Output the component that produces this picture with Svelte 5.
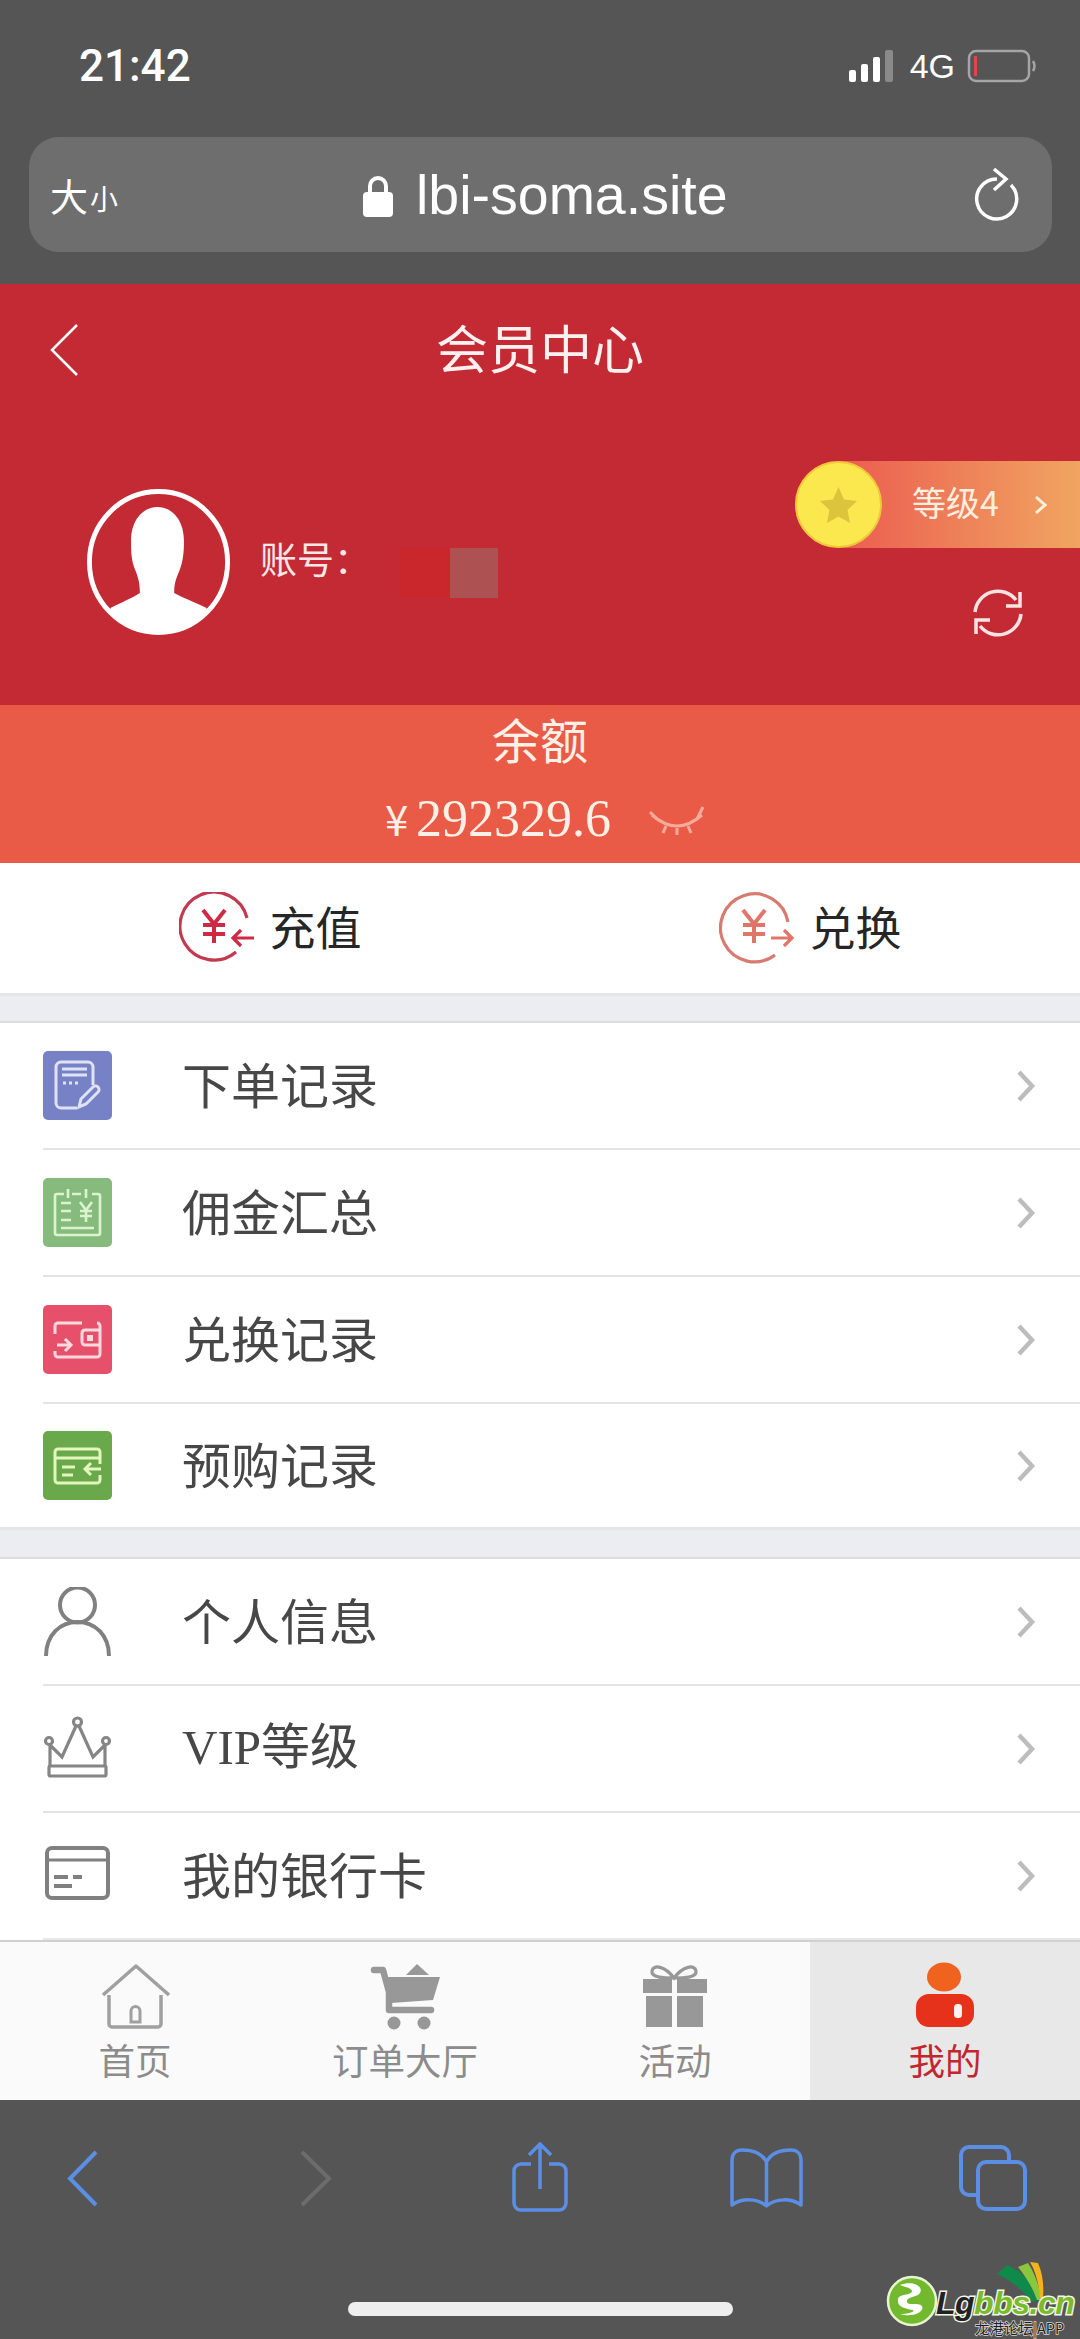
<div class="page">
  <header class="chrome">
    <div class="status">
      <span class="time">21:42</span>
      <div class="status-right">
        <svg width="50" height="34" viewBox="0 0 50 34">
          <rect x="1" y="21" width="7" height="12" rx="2" fill="#fff" />
          <rect x="13" y="15" width="7" height="18" rx="2" fill="#fff" />
          <rect x="25" y="8" width="7" height="25" rx="2" fill="#fff" />
          <rect x="37" y="1" width="8" height="32" rx="2" fill="#8a8a8a" />
        </svg>
        <span class="net">4G</span>
        <svg width="70" height="34" viewBox="0 0 70 34">
          <rect x="2" y="2" width="60" height="30" rx="7" fill="none" stroke="#a5a5a5" stroke-width="2.5" />
          <rect x="7" y="7" width="3" height="20" fill="#e2454a" />
          <path d="M66 12 Q69 17 66 22" fill="none" stroke="#a5a5a5" stroke-width="2.5" />
        </svg>
      </div>
    </div>
    <div class="address">
      <span class="size"><span class="big">大</span><span class="small">小</span></span>
      <div class="url">
        <svg width="30" height="42" viewBox="0 0 30 42">
          <path d="M7 18V11a8 8 0 0 1 16 0v7" fill="none" stroke="#fff" stroke-width="4" />
          <rect x="0" y="17" width="30" height="25" rx="4" fill="#fff" />
        </svg>
        <span>lbi-soma.site</span>
      </div>
      <svg class="reload" width="46" height="54" viewBox="0 0 46 54">
        <path d="M37 18 A20 20 0 1 1 23 12" fill="none" stroke="#fff" stroke-width="3.5" />
        <path d="M20 2 L32 12 L20 23" fill="none" stroke="#fff" stroke-width="3.5" />
      </svg>
    </div>
  </header>

  <section class="hero">
    <div class="nav">
      <svg width="30" height="54" viewBox="0 0 30 54">
        <path d="M28 2 L3 27 L28 52" fill="none" stroke="#fff" stroke-width="2.5" />
      </svg>
      <h1>会员中心</h1>
      <span></span>
    </div>
    <div class="profile">
      <div class="account">
        <svg class="avatar" width="143" height="146" viewBox="0 0 146 146" preserveAspectRatio="none">
          <defs><clipPath id="avatar-clip"><circle cx="73" cy="73" r="71" /></clipPath></defs>
          <circle cx="73" cy="73" r="70.5" fill="none" stroke="#fff" stroke-width="5" />
          <path clip-path="url(#avatar-clip)" d="M72 18 C86 18 99 30 99 52 C99 64 98 72 95 80 C92 88 89 92 89 104 C96 108 110 113 122 119 L122 150 L24 150 L24 119 C36 113 48 108 54 104 C54 92 51 85 48 78 C45 68 45 62 45 52 C45 30 58 18 72 18Z" fill="#fff" />
        </svg>
        <span class="label">账号：</span>
        <div class="redacted"><i></i><b></b></div>
      </div>
      <div class="side">
        <div class="level">
          <svg width="87" height="87" viewBox="0 0 87 87">
            <circle cx="43.5" cy="43.5" r="42.5" fill="#fbe74e" stroke="#efc83a" stroke-width="2" />
            <path d="M43.5 26 L49 38.5 L62 40 L52.5 49 L55 62 L43.5 55.5 L32 62 L34.5 49 L25 40 L38 38.5Z" fill="#dcc43c" />
          </svg>
          <span class="level-text">等级4</span>
          <svg width="14" height="20" viewBox="0 0 14 20">
            <path d="M2 2 L11 10 L2 18" fill="none" stroke="#fdf0dc" stroke-width="3" />
          </svg>
        </div>
        <svg class="sync" width="52" height="52" viewBox="0 0 52 52">
          <path d="M3 25 A23 23 0 0 1 44 13" fill="none" stroke="#fbe3e3" stroke-width="3.5" />
          <path d="M49 27 A23 23 0 0 1 8 39" fill="none" stroke="#fbe3e3" stroke-width="3.5" />
          <path d="M48 5 V19 H34" fill="none" stroke="#fbe3e3" stroke-width="3.5" />
          <path d="M4 47 V33 H18" fill="none" stroke="#fbe3e3" stroke-width="3.5" />
        </svg>
      </div>
    </div>
  </section>

  <section class="balance">
    <div class="balance-title">余额</div>
    <div class="amount">
      <span class="yen">¥</span><span class="digits">292329.6</span>
      <svg width="56" height="30" viewBox="0 0 56 30">
        <path d="M3 9 Q28 31 53 9" fill="none" stroke="#f4ab9a" stroke-width="3" />
        <path d="M8 13 L1 6 M48 13 L54 1 M17 20 L14 27 M28 22 L28 29 M39 20 L42 27" fill="none" stroke="#f4ab9a" stroke-width="3" />
      </svg>
    </div>
  </section>

  <section class="actions">
    <div class="action">
      <svg width="76" height="72" viewBox="0 0 76 72">
        <path d="M68 26 A34 34 0 1 0 57 60" fill="none" stroke="#c23a50" stroke-width="3.2" />
        <path d="M24 18 L35 32 L46 18 M24 33 H46 M24 42 H46 M35 32 V51" fill="none" stroke="#cf2a44" stroke-width="4" />
        <path d="M75 46 H54 M62 38 L54 46 L62 54" fill="none" stroke="#cf2a44" stroke-width="3.2" />
      </svg>
      <span>充值</span>
    </div>
    <div class="action">
      <svg width="76" height="72" viewBox="0 0 76 72">
        <path d="M69 30 A34 34 0 1 0 56 63" fill="none" stroke="#d77a70" stroke-width="3.2" />
        <path d="M24 18 L35 32 L46 18 M24 33 H46 M24 42 H46 M35 32 V51" fill="none" stroke="#e0756a" stroke-width="4" />
        <path d="M52 46 H73 M65 38 L73 46 L65 54" fill="none" stroke="#e0756a" stroke-width="3.2" />
      </svg>
      <span>兑换</span>
    </div>
  </section>

  <div class="gap first"></div>

  {#snippet chevron()}
    <svg width="20" height="34" viewBox="0 0 20 34">
      <path d="M3 3 L16 17 L3 31" fill="none" stroke="#bdbdbd" stroke-width="4.5" />
    </svg>
  {/snippet}

  {#snippet row(label, icon)}
    <div class="row">
      {@render icon()}
      <span class="row-label">{@html label}</span>
      {@render chevron()}
    </div>
  {/snippet}

  {#snippet doc()}
    <svg class="tile" width="69" height="69" viewBox="0 0 69 69">
      <rect width="69" height="69" rx="5" fill="#7782c6" />
      <path d="M34 57 H18 a5 5 0 0 1-5-5 V16 a5 5 0 0 1 5-5 H45 a5 5 0 0 1 5 5 V34" fill="none" stroke="#dfe2f6" stroke-width="3" />
      <path d="M19 18 H44 M19 24 H44" stroke="#dfe2f6" stroke-width="3" />
      <path d="M20 32 H23 M26 32 H29 M32 32 H35" stroke="#dfe2f6" stroke-width="3" />
      <path d="M36 56 L38 48 L50 36 a3.5 3.5 0 0 1 5 5 L43 53Z" fill="none" stroke="#dfe2f6" stroke-width="3" />
    </svg>
  {/snippet}
  {#snippet calendar()}
    <svg class="tile" width="69" height="69" viewBox="0 0 69 69">
      <rect width="69" height="69" rx="5" fill="#86bb7d" />
      <path d="M21 16 H14 a2 2 0 0 0-2 2 V55 a2 2 0 0 0 2 2 H55 a2 2 0 0 0 2-2 V18 a2 2 0 0 0-2-2 H49 M29 16 H38" fill="none" stroke="#dcf3cf" stroke-width="2.6" />
      <path d="M25 11 V20 M43 11 V20" stroke="#dcf3cf" stroke-width="2.6" />
      <path d="M18 25 H28 M18 33 H28 M18 42 H28 M18 50 H51" stroke="#dcf3cf" stroke-width="2.6" />
      <path d="M37 24 L43 32 L49 24 M37 33 H49 M37 38 H49 M43 32 V44" fill="none" stroke="#dcf3cf" stroke-width="2.6" />
    </svg>
  {/snippet}
  {#snippet wallet()}
    <svg class="tile" width="69" height="69" viewBox="0 0 69 69">
      <rect width="69" height="69" rx="5" fill="#e6506a" />
      <path d="M12 29 V21 a3 3 0 0 1 3-3 H39 M54 18 a3 3 0 0 1 3 3 V49 a3 3 0 0 1-3 3 H15 a3 3 0 0 1-3-3 V46" fill="none" stroke="#fbdadf" stroke-width="3" />
      <path d="M57 25 H42 a3 3 0 0 0-3 3 V37 a3 3 0 0 0 3 3 H57" fill="none" stroke="#fbdadf" stroke-width="3" />
      <rect x="44" y="30" width="6" height="6" fill="#fbdadf" />
      <path d="M14 40 H28 M22 34 L28 40 L22 46" fill="none" stroke="#fbdadf" stroke-width="3" />
    </svg>
  {/snippet}
  {#snippet cardIn()}
    <svg class="tile" width="69" height="69" viewBox="0 0 69 69">
      <rect width="69" height="69" rx="5" fill="#69a84b" />
      <path d="M57 33 V21 a3 3 0 0 0-3-3 H15 a3 3 0 0 0-3 3 V49 a3 3 0 0 0 3 3 H54 a3 3 0 0 0 3-3 V44" fill="none" stroke="#e3f6bd" stroke-width="3" />
      <path d="M12 27 H57 M19 36 H32 M19 44 H30" stroke="#e3f6bd" stroke-width="3" />
      <path d="M58 38 H42 M48 32 L42 38 L48 44" fill="none" stroke="#e3f6bd" stroke-width="3" />
    </svg>
  {/snippet}
  {#snippet person()}
    <svg class="tile" width="69" height="69" viewBox="0 0 69 69">
      <circle cx="34.5" cy="18" r="17.5" fill="none" stroke="#808080" stroke-width="4" />
      <path d="M3 69 C3 48 17 35 34.5 35 C52 35 66 48 66 69" fill="none" stroke="#808080" stroke-width="4" />
    </svg>
  {/snippet}
  {#snippet crown()}
    <svg class="tile" width="69" height="69" viewBox="0 0 69 69">
      <circle cx="34.5" cy="8" r="4" fill="none" stroke="#858585" stroke-width="3.2" />
      <circle cx="6" cy="27" r="3.5" fill="none" stroke="#858585" stroke-width="3.2" />
      <circle cx="63" cy="27" r="3.5" fill="none" stroke="#858585" stroke-width="3.2" />
      <path d="M7 31 V52 M62 31 V52 M8 32 L19 43 L33 12 M61 32 L50 43 L36 12" fill="none" stroke="#858585" stroke-width="3.2" />
      <rect x="6" y="52" width="57" height="10" rx="1.5" fill="none" stroke="#858585" stroke-width="3.2" />
    </svg>
  {/snippet}
  {#snippet bankcard()}
    <svg class="tile" width="69" height="69" viewBox="0 0 69 69">
      <rect x="4" y="7" width="61" height="50" rx="5" fill="none" stroke="#808080" stroke-width="4" />
      <path d="M4 19 H65" stroke="#808080" stroke-width="3" />
      <path d="M11 36 H25 M30 36 H39 M11 45 H29" stroke="#808080" stroke-width="4" />
    </svg>
  {/snippet}

  <section class="list">
    {@render row('下单记录', doc)}
    {@render row('佣金汇总', calendar)}
    {@render row('兑换记录', wallet)}
    {@render row('预购记录', cardIn)}
  </section>

  <div class="gap"></div>

  <section class="list second">
    {@render row('个人信息', person)}
    {@render row('<span class="latin">VIP</span>等级', crown)}
    {@render row('我的银行卡', bankcard)}
  </section>

  <nav class="tabs">
    <div class="tab">
      <svg width="80" height="70" viewBox="0 0 80 70">
        <path d="M8 33 L41 4 L74 33 M14 33 V62 a3 3 0 0 0 3 3 H63 a3 3 0 0 0 3-3 V33" fill="none" stroke="#a0a0a0" stroke-width="3.5" stroke-linejoin="round" />
        <path d="M36 60 V49 a4.5 4.5 0 0 1 9 0 V60Z" fill="none" stroke="#a0a0a0" stroke-width="3" />
      </svg>
      <span>首页</span>
    </div>
    <div class="tab">
      <svg width="80" height="70" viewBox="0 0 80 70">
        <path d="M9 8 H18 L24 30 V48 H66" fill="none" stroke="#989898" stroke-width="6.5" stroke-linecap="round" stroke-linejoin="round" />
        <path d="M21 15 H75 L68 38 L26 41Z" fill="#989898" />
        <path d="M41 13 L52 2 L64 13Z" fill="#989898" />
        <circle cx="29" cy="61" r="6.5" fill="#989898" />
        <circle cx="59" cy="61" r="6.5" fill="#989898" />
      </svg>
      <span>订单大厅</span>
    </div>
    <div class="tab">
      <svg width="80" height="70" viewBox="0 0 80 70">
        <path d="M8 17 H37 V31 H8Z M42 17 H72 V31 H42Z M11 34 H37 V65 H11Z M42 34 H68 V65 H42Z" fill="#989898" />
        <path d="M39 16 C30 4 18 2 17 9 C16 16 30 16 39 16 C48 16 62 16 61 9 C60 2 48 4 39 16Z" fill="none" stroke="#989898" stroke-width="3.2" />
      </svg>
      <span>活动</span>
    </div>
    <div class="tab active">
      <svg width="80" height="70" viewBox="0 0 80 70">
        <ellipse cx="39" cy="15" rx="17" ry="14.5" fill="#f0631f" />
        <rect x="11" y="32" width="58" height="33" rx="13" fill="#e6311b" />
        <rect x="49" y="42" width="8" height="14" rx="3.5" fill="#fdf3ee" />
      </svg>
      <span>我的</span>
    </div>
  </nav>

  <footer class="toolbar">
    <svg width="60" height="72" viewBox="0 0 60 72">
      <path d="M43 10 L17 36.5 L43 63" fill="none" stroke="#5b8fe6" stroke-width="4" />
    </svg>
    <svg width="60" height="72" viewBox="0 0 60 72">
      <path d="M20 10 L47 36.5 L20 63" fill="none" stroke="#6c6c6c" stroke-width="4" />
    </svg>
    <svg width="60" height="72" viewBox="0 0 60 72">
      <path d="M21 22 H11 a7 7 0 0 0-7 7 V61 a7 7 0 0 0 7 7 H49 a7 7 0 0 0 7-7 V29 a7 7 0 0 0-7-7 H39" fill="none" stroke="#5b8fe6" stroke-width="3.5" />
      <path d="M30 3 V47 M19 13 L30 2 L41 13" fill="none" stroke="#5b8fe6" stroke-width="3.5" />
    </svg>
    <svg class="over" width="60" height="72" viewBox="0 0 60 72">
      <path d="M27.5 20 C23 11 13 8 3 8 C-3 8 -7 12 -7 18 V63 C3 56 18 56 27.5 64 C37 56 52 56 62 63 V18 C62 12 58 8 52 8 C42 8 32 11 27.5 20 V64" fill="none" stroke="#5b8fe6" stroke-width="3.5" stroke-linejoin="round" />
    </svg>
    <svg class="over" width="60" height="72" viewBox="0 0 60 72">
      <path d="M10 53 H2 a8 8 0 0 1-8-8 V13 a8 8 0 0 1 8-8 H34 a8 8 0 0 1 8 8 V19" fill="none" stroke="#5b8fe6" stroke-width="4" />
      <rect x="11" y="20" width="47" height="47" rx="8" fill="none" stroke="#5b8fe6" stroke-width="4" />
    </svg>
  </footer>

  <div class="home-bar"></div>

  <div class="mark">
    <svg class="mark-art" width="200" height="79" viewBox="0 0 200 79">
      <path d="M117 14 L127 5 C143 12 155 25 159 40 L152 42 C145 32 132 21 117 14Z" fill="#0f8a4a" />
      <path d="M138 7 L148 3 C155 14 160 27 161 40 L157 40 C153 28 146 17 138 7Z" fill="#8cc63f" />
      <path d="M150 2 L158 3 C163 14 164 27 163 38 L160 38 C159 25 156 12 150 2Z" fill="#f5b21b" />
      <circle cx="32" cy="41" r="24" fill="#72b92e" stroke="#e8f4d0" stroke-width="2.5" />
      <path d="M20 25 C32 20 44 26 40 33 C37 38 26 36 27 42 C28 46 38 42 42 46 C45 52 32 58 20 54 C28 54 35 52 33 50 C28 49 17 48 18 40 C18 33 32 36 32 31 C32 28 24 27 20 25Z" fill="#fff" />
    </svg>
    <span class="mark-name"><span class="lg">Lg</span><span class="bbs">bbs.cn</span></span>
    <span class="mark-sub">龙港论坛|APP</span>
  </div>
</div>

<style>
  :global(body) {
    margin: 0;
    background: #555556;
  }
  .page {
    position: relative;
    width: 1080px;
    height: 2339px;
    overflow: hidden;
    font-family: "Noto Sans CJK SC", "Liberation Sans", sans-serif;
    background: #555556;
  }
  .chrome {
    height: 284px;
    box-sizing: border-box;
    padding-top: 44px;
    color: #fff;
  }
  .status {
    display: flex;
    justify-content: space-between;
    align-items: center;
    height: 44px;
    padding: 0 43px 0 79px;
  }
  .time {
    font: 500 44px/44px Roboto, "Liberation Sans", sans-serif;
  }
  .status-right {
    display: flex;
    align-items: center;
  }
  .net {
    margin: 0 12px 0 12px;
    font: 400 34px/34px "Liberation Sans", sans-serif;
  }
  .address {
    position: relative;
    display: flex;
    align-items: center;
    justify-content: space-between;
    height: 115px;
    margin: 49px 28px 0 29px;
    padding: 0 32px 0 21px;
    border-radius: 30px;
    background: #6e6e6e;
  }
  .size {
    display: flex;
    align-items: flex-end;
  }
  .big {
    font-size: 38px;
    line-height: 44px;
  }
  .small {
    margin-left: 2px;
    font-size: 28px;
    line-height: 38px;
  }
  .url {
    position: absolute;
    left: 334px;
    top: 0;
    bottom: 0;
    display: flex;
    align-items: center;
    gap: 23px;
    padding-top: 2px;
    font: 400 55.5px/1 "Liberation Sans", sans-serif;
  }
  .reload {
    margin-top: -2px;
  }
  .hero {
    height: 421px;
    background: #c42a33;
    color: #fff;
  }
  .nav {
    display: grid;
    grid-template-columns: 1fr auto 1fr;
    align-items: center;
    height: 132px;
    padding-left: 49px;
    padding-right: 49px;
  }
  h1 {
    margin: 0;
    padding-bottom: 6px;
    font-size: 52px;
    font-weight: 400;
    line-height: 60px;
    color: #fdf0f0;
  }
  .profile {
    display: flex;
    justify-content: space-between;
    align-items: flex-start;
  }
  .account {
    display: flex;
    align-items: center;
    margin-top: 73px;
    padding-left: 87px;
  }
  .avatar {
    margin-right: 30px;
  }
  .label {
    margin-top: -8px;
    font-size: 37px;
    color: #fbe7e7;
  }
  .redacted {
    display: flex;
    margin: 22px 0 0 29px;
  }
  .redacted i {
    width: 50px;
    height: 50px;
    background: #c9272b;
  }
  .redacted b {
    width: 48px;
    height: 50px;
    background: #ad5152;
  }
  .side {
    display: flex;
    flex-direction: column;
    align-items: flex-end;
    margin-top: 45px;
  }
  .level {
    display: flex;
    align-items: center;
    width: 285px;
    height: 87px;
    border-radius: 44px 0 0 44px;
    background: linear-gradient(90deg, #ec5c50 15%, #f0a561 100%);
  }
  .level-text {
    width: 84px;
    margin: 0 38px 0 30px;
    padding-bottom: 6px;
    font-size: 34px;
    white-space: nowrap;
    color: #fdeee0;
  }
  .sync {
    margin: 39px 56px 0 0;
  }
  .balance {
    height: 158px;
    box-sizing: border-box;
    padding-top: 7px;
    background: #e95b46;
    color: #fdf0e6;
    text-align: center;
  }
  .balance-title {
    font-size: 48px;
    line-height: 52px;
  }
  .amount {
    display: flex;
    align-items: center;
    height: 70px;
    margin-top: 19px;
    padding-left: 385px;
    font-family: "Liberation Serif", serif;
  }
  .yen {
    width: 31px;
    font-family: "Noto Sans CJK SC", sans-serif;
    font-size: 42px;
    line-height: 50px;
    text-align: left;
  }
  .digits {
    font-size: 52px;
    margin-right: 38px;
  }
  .amount svg {
    margin-top: 6px;
  }
  .actions {
    display: grid;
    grid-template-columns: 1fr 1fr;
    height: 130px;
    background: #fff;
  }
  .action {
    display: flex;
    align-items: center;
    justify-content: center;
    gap: 15px;
    font-size: 46px;
    color: #262626;
  }
  .action span {
    padding-bottom: 7px;
  }
  .gap {
    box-sizing: border-box;
    height: 32px;
    border-top: 3px solid #e6e6e8;
    border-bottom: 2px solid #dedee2;
    background: #ecedf3;
  }
  .gap.first {
    height: 30px;
  }
  .list {
    background: #fff;
  }
  .row {
    display: flex;
    align-items: center;
    box-sizing: border-box;
    height: 127px;
    margin-left: 43px;
    padding-right: 44px;
    border-bottom: 2px solid #e3e3e3;
  }
  .list:not(.second) .row:last-child {
    height: 123px;
    border-bottom: 0;
  }
  .list.second .row:last-child {
    border-bottom-color: #e8e8e8;
  }
  .tile {
    flex: none;
  }
  .row-label {
    flex: 1;
    margin-left: 70px;
    padding-bottom: 6px;
    font-size: 49px;
    line-height: 60px;
    color: #474747;
  }
  .row-label :global(.latin) {
    font-family: "Liberation Serif", serif;
  }
  .tabs {
    display: grid;
    grid-template-columns: repeat(4, 270px);
    box-sizing: border-box;
    height: 160px;
    border-top: 2px solid #d0d0d0;
    background: #fafafa;
  }
  .tab {
    display: flex;
    flex-direction: column;
    align-items: center;
    padding-top: 20px;
    font-size: 36.5px;
    line-height: 40px;
    color: #8c8c8c;
  }
  .tab span {
    margin-top: 8px;
  }
  .tab.active {
    background: #e8e8e8;
    color: #c1272d;
  }
  .toolbar {
    display: flex;
    justify-content: space-between;
    padding: 42px 53px 0;
  }
  .over {
    overflow: visible;
  }
  .home-bar {
    position: absolute;
    left: 348px;
    top: 2302px;
    width: 385px;
    height: 14px;
    border-radius: 7px;
    background: #eeeeee;
  }
  .mark {
    position: absolute;
    left: 880px;
    top: 2260px;
    width: 200px;
    height: 79px;
  }
  .mark-art {
    position: absolute;
    left: 0;
    top: 0;
  }
  .mark-name {
    position: absolute;
    left: 56px;
    top: 24px;
    font: italic 700 32px/38px "Liberation Sans", sans-serif;
    letter-spacing: -0.5px;
    white-space: nowrap;
    paint-order: stroke fill;
    -webkit-text-stroke: 3px #f2f7e6;
  }
  .lg {
    color: #222;
  }
  .bbs {
    color: #79bb2c;
  }
  .mark-sub {
    position: absolute;
    left: 95px;
    top: 60px;
    font-size: 14.5px;
    line-height: 16px;
    white-space: nowrap;
    color: #1e1e1e;
    paint-order: stroke fill;
    -webkit-text-stroke: 1.5px #d8d8d8;
  }
</style>
